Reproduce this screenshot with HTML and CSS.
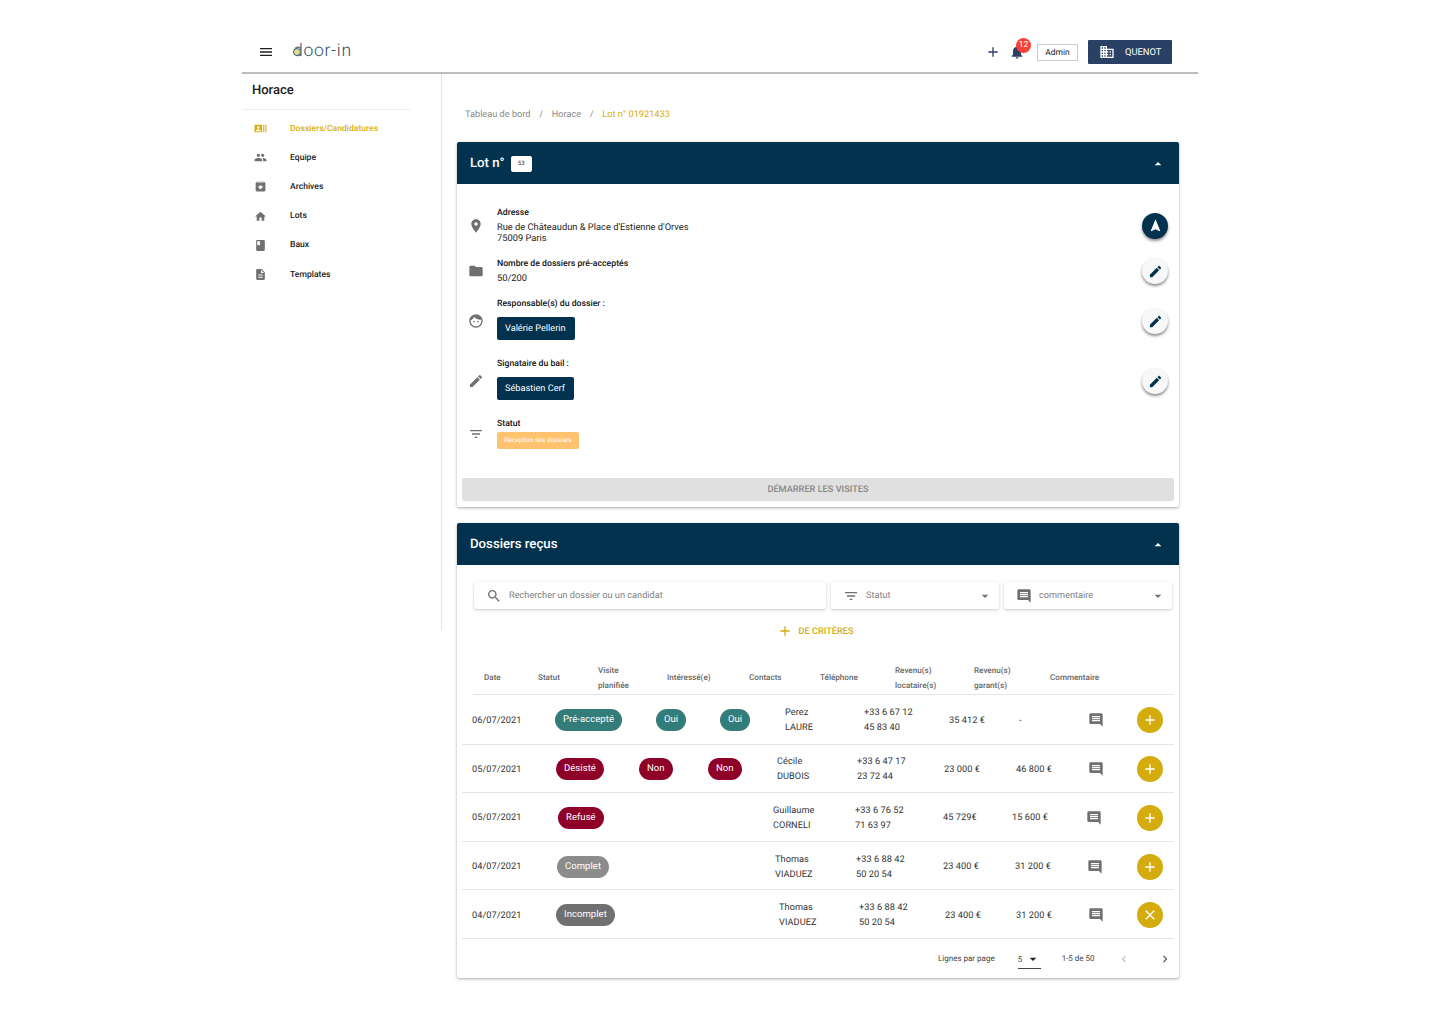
FILE: index.html
```html
<!DOCTYPE html>
<html lang="fr">
  <head>
    <meta charset="UTF-8" />
    <meta name="viewport" content="width=device-width, initial-scale=1.0" />
    <title>door-in</title>
    <link rel="stylesheet" href="styles.css">
  </head>
  <body>
    <svg class="defs" xmlns="http://www.w3.org/2000/svg">
      <symbol id="i-menu" viewBox="0 0 24 24"><path d="M3 18h18v-2H3v2zm0-5h18v-2H3v2zm0-7v2h18V6H3z"/></symbol>
      <symbol id="i-add" viewBox="0 0 24 24"><path d="M19 13h-6v6h-2v-6H5v-2h6V5h2v6h6v2z"/></symbol>
      <symbol id="i-bell" viewBox="0 0 24 24"><path d="M12 22c1.1 0 2-.9 2-2h-4c0 1.1.89 2 2 2zm6-6v-5c0-3.07-1.64-5.64-4.5-6.32V4c0-.83-.67-1.5-1.5-1.5s-1.5.67-1.5 1.5v.68C7.63 5.36 6 7.92 6 11v5l-2 2v1h16v-1l-2-2z"/></symbol>
      <symbol id="i-domain" viewBox="0 0 24 24"><path d="M12 7V3H2v18h20V7H12zM6 19H4v-2h2v2zm0-4H4v-2h2v2zm0-4H4V9h2v2zm0-4H4V5h2v2zm4 12H8v-2h2v2zm0-4H8v-2h2v2zm0-4H8V9h2v2zm0-4H8V5h2v2zm10 12h-8v-2h2v-2h-2v-2h2v-2h-2V9h8v10zm-2-8h-2v2h2v-2zm0 4h-2v2h2v-2z"/></symbol>
      <symbol id="i-actors" viewBox="0 0 24 24"><path d="M21 5v14h2V5h-2zm-4 14h2V5h-2v14zM14 5H2c-.55 0-1 .45-1 1v12c0 .55.45 1 1 1h12c.55 0 1-.45 1-1V6c0-.55-.45-1-1-1zM8 7.75c1.24 0 2.25 1.01 2.25 2.25S9.24 12.25 8 12.25 5.75 11.24 5.75 10 6.76 7.75 8 7.75zM12.5 17h-9v-.75c0-1.5 3-2.25 4.5-2.25s4.5.75 4.5 2.25V17z"/></symbol>
      <symbol id="i-people" viewBox="0 0 24 24"><path d="M16 11c1.66 0 2.99-1.34 2.99-3S17.66 5 16 5c-1.66 0-3 1.34-3 3s1.34 3 3 3zm-8 0c1.66 0 2.99-1.34 2.99-3S9.66 5 8 5C6.34 5 5 6.34 5 8s1.34 3 3 3zm0 2c-2.33 0-7 1.17-7 3.5V19h14v-2.5c0-2.33-4.67-3.5-7-3.5zm8 0c-.29 0-.62.02-.97.05 1.16.84 1.97 1.97 1.97 3.45V19h6v-2.5c0-2.33-4.67-3.5-7-3.5z"/></symbol>
      <symbol id="i-archive" viewBox="0 0 24 24"><path d="M20.54 5.23l-1.39-1.68C18.88 3.21 18.47 3 18 3H6c-.47 0-.88.21-1.16.55L3.46 5.23C3.17 5.57 3 6.02 3 6.5V19c0 1.1.9 2 2 2h14c1.1 0 2-.9 2-2V6.5c0-.48-.17-.93-.46-1.27zM12 17.5L6.5 12H10v-2h4v2h3.5L12 17.5zM5.12 5l.81-1h12l.94 1H5.12z"/></symbol>
      <symbol id="i-home" viewBox="0 0 24 24"><path d="M10 20v-6h4v6h5v-8h3L12 3 2 12h3v8z"/></symbol>
      <symbol id="i-book" viewBox="0 0 24 24"><path d="M18 2H6c-1.1 0-2 .9-2 2v16c0 1.1.9 2 2 2h12c1.1 0 2-.9 2-2V4c0-1.1-.9-2-2-2zM6 4h5v8l-2.5-1.5L6 12V4z"/></symbol>
      <symbol id="i-doc" viewBox="0 0 24 24"><path d="M14 2H6c-1.1 0-1.99.9-1.99 2L4 20c0 1.1.89 2 1.99 2H18c1.1 0 2-.9 2-2V8l-6-6zm2 16H8v-2h8v2zm0-4H8v-2h8v2zm-3-5V3.5L18.5 9H13z"/></symbol>
      <symbol id="i-place" viewBox="0 0 24 24"><path d="M12 2C8.13 2 5 5.13 5 9c0 5.25 7 13 7 13s7-7.75 7-13c0-3.87-3.13-7-7-7zm0 9.5c-1.38 0-2.5-1.12-2.5-2.5s1.12-2.5 2.5-2.5 2.5 1.12 2.5 2.5-1.12 2.5-2.5 2.5z"/></symbol>
      <symbol id="i-folder" viewBox="0 0 24 24"><path d="M10 4H4c-1.1 0-1.99.9-1.99 2L2 18c0 1.1.9 2 2 2h16c1.1 0 2-.9 2-2V8c0-1.1-.9-2-2-2h-8l-2-2z"/></symbol>
      <symbol id="i-face" viewBox="0 0 24 24"><path d="M9 11.75c-.69 0-1.25.56-1.25 1.25s.56 1.25 1.25 1.25 1.25-.56 1.25-1.25-.56-1.25-1.25-1.25zm6 0c-.69 0-1.25.56-1.25 1.25s.56 1.25 1.25 1.25 1.25-.56 1.25-1.25-.56-1.25-1.25-1.25zM12 2C6.48 2 2 6.48 2 12s4.48 10 10 10 10-4.48 10-10S17.52 2 12 2zm0 18c-4.41 0-8-3.59-8-8 0-.29.02-.58.05-.86 2.36-1.05 4.23-2.98 5.21-5.37C11.07 8.33 14.05 10 17.42 10c.78 0 1.53-.09 2.25-.26.21.71.33 1.47.33 2.26 0 4.41-3.59 8-8 8z"/></symbol>
      <symbol id="i-edit" viewBox="0 0 24 24"><path d="M3 17.25V21h3.75L17.81 9.94l-3.75-3.75L3 17.25zM20.71 7.04c.39-.39.39-1.02 0-1.41l-2.34-2.34c-.39-.39-1.02-.39-1.41 0l-1.83 1.83 3.75 3.75 1.83-1.83z"/></symbol>
      <symbol id="i-filter" viewBox="0 0 24 24"><path d="M10 18h4v-2h-4v2zM3 6v2h18V6H3zm3 7h12v-2H6v2z"/></symbol>
      <symbol id="i-nav" viewBox="0 0 24 24"><path d="M12 2L4.5 20.29l.71.71L12 18l6.79 3 .71-.71z"/></symbol>
      <symbol id="i-search" viewBox="0 0 24 24"><path d="M15.5 14h-.79l-.28-.27C15.41 12.59 16 11.11 16 9.5 16 5.91 13.09 3 9.5 3S3 5.91 3 9.5 5.91 16 9.5 16c1.61 0 3.09-.59 4.23-1.57l.27.28v.79l5 4.99L20.49 19l-4.99-5zm-6 0C7.01 14 5 11.99 5 9.5S7.01 5 9.5 5 14 7.01 14 9.5 11.99 14 9.5 14z"/></symbol>
      <symbol id="i-comment" viewBox="0 0 24 24"><path d="M21.99 4c0-1.1-.89-2-1.99-2H4c-1.1 0-2 .9-2 2v12c0 1.1.9 2 2 2h14l4 4-.01-18zM18 14H6v-2h12v2zm0-3H6V9h12v2zm0-3H6V6h12v2z"/></symbol>
      <symbol id="i-down" viewBox="0 0 24 24"><path d="M7 10l5 5 5-5z"/></symbol>
      <symbol id="i-up" viewBox="0 0 24 24"><path d="M7 14l5-5 5 5z"/></symbol>
      <symbol id="i-left" viewBox="0 0 24 24"><path d="M15.41 7.41L14 6l-6 6 6 6 1.41-1.41L10.83 12z"/></symbol>
      <symbol id="i-right" viewBox="0 0 24 24"><path d="M10 6L8.59 7.41 13.17 12l-4.58 4.59L10 18l6-6z"/></symbol>
      <symbol id="i-close" viewBox="0 0 24 24"><path d="M19 6.41L17.59 5 12 10.59 6.41 5 5 6.41 10.59 12 5 17.59 6.41 19 12 13.41 17.59 19 19 17.59 13.41 12z"/></symbol>
    </svg>

    <div class="app">
      <header class="topbar">
        <svg class="menu-icon"><use href="#i-menu"/></svg>
        <div class="logo">
          <span class="logo-dot"></span>
          <span>door-in</span>
        </div>
        <div class="topbar-right">
          <svg class="top-add"><use href="#i-add"/></svg>
          <div class="bell">
            <svg><use href="#i-bell"/></svg>
            <span class="badge">12</span>
          </div>
          <div class="role">Admin</div>
          <div class="company">
            <svg><use href="#i-domain"/></svg>
            <span>QUENOT</span>
          </div>
        </div>
      </header>

      <div class="layout">
        <aside class="sidebar">
          <div class="side-title">Horace</div>
          <nav class="side-nav">
            <a class="nav-item active"><svg><use href="#i-actors"/></svg>Dossiers/Candidatures</a>
            <a class="nav-item"><svg><use href="#i-people"/></svg>Equipe</a>
            <a class="nav-item"><svg><use href="#i-archive"/></svg>Archives</a>
            <a class="nav-item"><svg><use href="#i-home"/></svg>Lots</a>
            <a class="nav-item"><svg><use href="#i-book"/></svg>Baux</a>
            <a class="nav-item"><svg><use href="#i-doc"/></svg>Templates</a>
          </nav>
        </aside>

        <main class="main">
          <div class="crumbs">
            <span>Tableau de bord</span>
            <span>/</span>
            <span>Horace</span>
            <span>/</span>
            <span class="crumb-current">Lot n° 01921433</span>
          </div>

          <section class="card">
            <div class="card-head">
              <div class="card-title">Lot n° <span class="lot-tag">53</span></div>
              <svg class="head-arrow"><use href="#i-up"/></svg>
            </div>
            <div class="lot-body">
              <div class="info-row">
                <svg class="info-icon"><use href="#i-place"/></svg>
                <div class="info-text">
                  <div class="info-label">Adresse</div>
                  <div class="info-value">Rue de Châteaudun &amp; Place d'Estienne d'Orves<br />75009 Paris</div>
                </div>
                <button class="round-btn dark"><svg><use href="#i-nav"/></svg></button>
              </div>
              <div class="info-row">
                <svg class="info-icon"><use href="#i-folder"/></svg>
                <div class="info-text">
                  <div class="info-label">Nombre de dossiers pré-acceptés</div>
                  <div class="info-value">50/200</div>
                </div>
                <button class="round-btn"><svg><use href="#i-edit"/></svg></button>
              </div>
              <div class="info-row">
                <svg class="info-icon"><use href="#i-face"/></svg>
                <div class="info-text">
                  <div class="info-label">Responsable(s) du dossier :</div>
                  <div class="person">Valérie Pellerin</div>
                </div>
                <button class="round-btn"><svg><use href="#i-edit"/></svg></button>
              </div>
              <div class="info-row">
                <svg class="info-icon"><use href="#i-edit"/></svg>
                <div class="info-text">
                  <div class="info-label">Signataire du bail :</div>
                  <div class="person">Sébastien Cerf</div>
                </div>
                <button class="round-btn"><svg><use href="#i-edit"/></svg></button>
              </div>
              <div class="info-row">
                <svg class="info-icon"><use href="#i-filter"/></svg>
                <div class="info-text">
                  <div class="info-label">Statut</div>
                  <div class="status-tag">Réception des dossiers</div>
                </div>
              </div>
              <div class="start-btn">DÉMARRER LES VISITES</div>
            </div>
          </section>

          <section class="card">
            <div class="card-head">
              <div class="card-title">Dossiers reçus</div>
              <svg class="head-arrow"><use href="#i-up"/></svg>
            </div>
            <div class="filters">
              <div class="filter filter-search">
                <svg class="filter-icon"><use href="#i-search"/></svg>
                <span>Rechercher un dossier ou un candidat</span>
              </div>
              <div class="filter filter-select">
                <svg class="filter-icon"><use href="#i-filter"/></svg>
                <span>Statut</span>
                <svg class="filter-arrow"><use href="#i-down"/></svg>
              </div>
              <div class="filter filter-select">
                <svg class="filter-icon"><use href="#i-comment"/></svg>
                <span>commentaire</span>
                <svg class="filter-arrow"><use href="#i-down"/></svg>
              </div>
            </div>
            <div class="more-filters">
              <svg><use href="#i-add"/></svg>
              <span>DE CRITÈRES</span>
            </div>

            <div class="table-head">
              <div>Date</div>
              <div>Statut</div>
              <div>Visite<br />planifiée</div>
              <div>Intéressé(e)</div>
              <div>Contacts</div>
              <div>Téléphone</div>
              <div>Revenu(s)<br />locataire(s)</div>
              <div>Revenu(s)<br />garant(s)</div>
              <div>Commentaire</div>
            </div>

            <div class="row row-a">
              <div>06/07/2021</div>
              <div><span class="chip teal">Pré-accepté</span></div>
              <div><span class="chip teal">Oui</span></div>
              <div><span class="chip teal">Oui</span></div>
              <div class="two-lines">Perez<br />LAURE</div>
              <div class="two-lines">+33 6 67 12<br />45 83 40</div>
              <div>35 412 €</div>
              <div>-</div>
              <svg class="row-comment"><use href="#i-comment"/></svg>
              <button class="gold-btn"><svg><use href="#i-add"/></svg></button>
            </div>
            <div class="row row-b">
              <div>05/07/2021</div>
              <div><span class="chip red">Désisté</span></div>
              <div><span class="chip red">Non</span></div>
              <div><span class="chip red">Non</span></div>
              <div class="two-lines">Cécile<br />DUBOIS</div>
              <div class="two-lines">+33 6 47 17<br />23 72 44</div>
              <div>23 000 €</div>
              <div>46 800 €</div>
              <svg class="row-comment"><use href="#i-comment"/></svg>
              <button class="gold-btn"><svg><use href="#i-add"/></svg></button>
            </div>
            <div class="row row-c">
              <div>05/07/2021</div>
              <div><span class="chip red">Refusé</span></div>
              <div></div>
              <div></div>
              <div class="two-lines">Guillaume<br />CORNELI</div>
              <div class="two-lines">+33 6 76 52<br />71 63 97</div>
              <div>45 729€</div>
              <div>15 600 €</div>
              <svg class="row-comment"><use href="#i-comment"/></svg>
              <button class="gold-btn"><svg><use href="#i-add"/></svg></button>
            </div>
            <div class="row row-d">
              <div>04/07/2021</div>
              <div><span class="chip grey">Complet</span></div>
              <div></div>
              <div></div>
              <div class="two-lines">Thomas<br />VIADUEZ</div>
              <div class="two-lines">+33 6 88 42<br />50 20 54</div>
              <div>23 400 €</div>
              <div>31 200 €</div>
              <svg class="row-comment"><use href="#i-comment"/></svg>
              <button class="gold-btn"><svg><use href="#i-add"/></svg></button>
            </div>
            <div class="row row-e">
              <div>04/07/2021</div>
              <div><span class="chip dark-grey">Incomplet</span></div>
              <div></div>
              <div></div>
              <div class="two-lines">Thomas<br />VIADUEZ</div>
              <div class="two-lines">+33 6 88 42<br />50 20 54</div>
              <div>23 400 €</div>
              <div>31 200 €</div>
              <svg class="row-comment"><use href="#i-comment"/></svg>
              <button class="gold-btn"><svg><use href="#i-close"/></svg></button>
            </div>

            <div class="pager">
              <span class="pager-label">Lignes par page</span>
              <div class="pager-select">
                <span>5</span>
                <svg><use href="#i-down"/></svg>
              </div>
              <span class="pager-count">1-5 de 50</span>
              <svg class="pager-prev"><use href="#i-left"/></svg>
              <svg class="pager-next"><use href="#i-right"/></svg>
            </div>
          </section>
        </main>
      </div>
    </div>
  </body>
</html>
```

FILE: styles.css
```css
* {
  margin: 0px;
  box-sizing: border-box;
  font-family: Roboto, "Liberation Sans", sans-serif;
  text-rendering: geometricPrecision;
}

body {
  background-color: #fff;
  color: #222;
}

svg {
  fill: currentColor;
  flex-shrink: 0;
}

button {
  border: none;
  padding: 0px;
  cursor: pointer;
}

.defs {
  display: none;
}

.app {
  width: 956px;
  margin: 30px auto 0px;
}

/* top bar */
.topbar {
  display: flex;
  align-items: center;
  height: 44px;
  padding-top: 2px;
  border-bottom: 2px solid #bdbdbd;
}

.menu-icon {
  width: 16px;
  height: 16px;
  margin-left: 16px;
  color: #1e1e1e;
}

.logo {
  position: relative;
  margin-left: 19px;
  margin-top: -2px;
  font-size: 17.5px;
  font-weight: 300;
  letter-spacing: 0.7px;
  color: #2b4c68;
}

.logo-dot {
  position: absolute;
  left: 0px;
  top: 7px;
  width: 8px;
  height: 8px;
  border: 1px solid #2b6c90;
  border-radius: 50%;
  background-color: #e6d98a;
}

.topbar-right {
  display: flex;
  align-items: center;
  margin-left: auto;
  margin-right: 26px;
}

.top-add {
  width: 16px;
  height: 16px;
  color: #2a4065;
}

.bell {
  position: relative;
  width: 16px;
  height: 16px;
  margin-left: 8px;
  color: #2a4065;
}

.bell svg {
  width: 16px;
  height: 16px;
}

.badge {
  position: absolute;
  left: 7px;
  top: -6px;
  width: 15px;
  height: 15px;
  border-radius: 50%;
  background-color: #f44336;
  color: #fff;
  font-size: 8.5px;
  line-height: 15px;
  text-align: center;
}

.role {
  width: 41px;
  height: 17px;
  margin-left: 12px;
  border: 1px solid #ccc;
  font-size: 8.5px;
  line-height: 16px;
  text-align: center;
}

.company {
  display: flex;
  align-items: center;
  width: 84px;
  height: 24px;
  margin-left: 10px;
  padding-left: 11px;
  border-radius: 1px;
  background-color: #2a4065;
  color: #fff;
  font-size: 9.4px;
}

.company svg {
  width: 16px;
  height: 16px;
  margin-right: 10px;
}

.layout {
  display: flex;
  align-items: flex-start;
}

/* sidebar */
.sidebar {
  width: 200px;
  height: 556px;
  border-right: 1px solid #e4e4e4;
}

.side-title {
  width: 169px;
  height: 36px;
  padding-left: 10px;
  border-bottom: 1px solid #eee;
  font-size: 13px;
  font-weight: 500;
  line-height: 33px;
  color: #222;
}

.side-nav {
  padding-top: 4px;
}

.nav-item {
  display: flex;
  align-items: center;
  height: 29.2px;
  padding-left: 12px;
  font-size: 8.6px;
  font-weight: 500;
  color: #222;
}

.nav-item svg {
  width: 13px;
  height: 13px;
  margin-right: 23px;
  color: #707070;
}

.nav-item.active,
.nav-item.active svg {
  color: #d9b00f;
}

/* main */
.main {
  width: 737px;
  padding-left: 15px;
}

.crumbs {
  display: flex;
  gap: 8.7px;
  height: 68px;
  padding-left: 8px;
  padding-top: 35px;
  font-size: 9.2px;
  color: #8a8a8a;
}

.crumb-current {
  color: #d4ac0d;
}

.card {
  width: 722px;
  margin-bottom: 16px;
  border-radius: 2px;
  background-color: #fff;
  box-shadow: 0px 1px 3px rgba(0, 0, 0, 0.35);
}

.card-head {
  display: flex;
  align-items: center;
  justify-content: space-between;
  height: 42px;
  padding-left: 13px;
  padding-right: 13px;
  padding-top: 1px;
  border-radius: 2px 2px 0px 0px;
  background-color: #03324f;
  color: #fff;
}

.card-title {
  display: flex;
  align-items: center;
  font-size: 13.2px;
  font-weight: 500;
}

.lot-tag {
  width: 21px;
  height: 16px;
  margin-left: 6px;
  border-radius: 2px;
  background-color: #fff;
  color: #333;
  font-size: 6px;
  font-weight: 400;
  line-height: 16px;
  text-align: center;
}

.head-arrow {
  width: 16px;
  height: 16px;
}

/* lot details */
.lot-body {
  padding: 23px 5px 6px;
}

.info-row {
  display: flex;
  align-items: center;
  margin-bottom: 14px;
}

.info-icon {
  width: 16px;
  height: 16px;
  margin-left: 5.5px;
  margin-right: 13.5px;
  color: #707070;
}

.info-text {
  flex: 1;
  font-size: 9.3px;
  line-height: 11px;
}

.info-label {
  padding-top: 1px;
  font-size: 8.7px;
  font-weight: 500;
  color: #111;
}

.info-value {
  margin-top: 3px;
  color: #222;
}

.person {
  width: fit-content;
  height: 23px;
  margin-top: 7px;
  margin-bottom: 4px;
  padding-left: 8px;
  padding-right: 9px;
  border-radius: 2px;
  background-color: #03324f;
  color: #fff;
  font-size: 9.2px;
  line-height: 23px;
}

.status-tag {
  width: 82px;
  height: 17px;
  margin-top: 2px;
  border-radius: 2px;
  background-color: #ffc26f;
  color: #fff;
  font-size: 6.5px;
  line-height: 17px;
  text-align: center;
}

.round-btn {
  display: flex;
  align-items: center;
  justify-content: center;
  width: 26px;
  height: 26px;
  margin-right: 6px;
  border-radius: 50%;
  background-color: #f8f8f8;
  color: #03324f;
  box-shadow: 0px 2px 3px rgba(0, 0, 0, 0.45);
}

.round-btn svg {
  width: 15px;
  height: 15px;
}

.round-btn.dark {
  background-color: #03324f;
  color: #fff;
}

.start-btn {
  height: 23px;
  margin-top: 29px;
  border-radius: 2px;
  background-color: #e0e0e0;
  color: #888;
  font-size: 9.2px;
  font-weight: 500;
  line-height: 23px;
  text-align: center;
}

/* filters */
.filters {
  display: flex;
  gap: 5px;
  padding-top: 17px;
  padding-left: 17px;
}

.filter {
  display: flex;
  align-items: center;
  height: 27px;
  border-radius: 2px;
  background-color: #fff;
  color: #808080;
  font-size: 9.2px;
  box-shadow: 0px 1px 3px rgba(0, 0, 0, 0.22);
}

.filter-search {
  width: 352px;
  padding-left: 12px;
}

.filter-select {
  width: 168px;
  padding-left: 12px;
}

.filter-icon {
  width: 16px;
  height: 16px;
  margin-right: 7px;
  color: #707070;
}

.filter-arrow {
  width: 16px;
  height: 16px;
  margin-left: auto;
  margin-right: 6px;
  color: #707070;
}

.more-filters {
  display: flex;
  align-items: center;
  justify-content: center;
  gap: 5px;
  height: 44px;
  padding-right: 5px;
  color: #d4ac0d;
  font-size: 9.2px;
  font-weight: 500;
}

.more-filters svg {
  width: 16px;
  height: 16px;
}

/* table */
.table-head {
  display: grid;
  grid-template-columns: 54px 60px 69px 82px 71px 75px 79px 76px 1fr;
  align-items: center;
  height: 42px;
  margin-left: 16px;
  margin-right: 5px;
  padding-left: 11px;
  padding-top: 8px;
  border-bottom: 1px solid #e4e4e4;
  color: #666;
  font-size: 8.1px;
  font-weight: 500;
  line-height: 15px;
}

.row {
  display: grid;
  align-items: center;
  height: 48.6px;
  margin-left: 5px;
  margin-right: 5px;
  padding-left: 10px;
  padding-top: 2px;
  border-bottom: 1px solid #e4e4e4;
  color: #333;
  font-size: 9.2px;
  letter-spacing: 0.05px;
}

.row-a {
  height: 49.6px;
  grid-template-columns: 83px 101px 64px 65px 79px 85px 70px 69px 49px 26px;
}

.row-b {
  grid-template-columns: 84px 83px 69px 69px 80px 87px 72px 72px 49px 26px;
}

.row-c {
  grid-template-columns: 86px 81px 67px 67px 82px 88px 69px 74px 51px 26px;
}

.row-d {
  grid-template-columns: 85px 82px 68px 68px 81px 87px 72px 72px 50px 26px;
}

.row-e {
  grid-template-columns: 84px 83px 69px 71px 80px 86px 71px 72px 49px 26px;
}

.two-lines {
  line-height: 15px;
}

.chip {
  display: inline-block;
  height: 22px;
  padding-left: 8px;
  padding-right: 8px;
  border-radius: 11px;
  color: #fff;
  font-size: 9.5px;
  line-height: 22px;
  white-space: nowrap;
}

.teal {
  background-color: #327d7a;
}

.red {
  background-color: #8f0029;
}

.grey {
  background-color: #8c8c8c;
}

.dark-grey {
  background-color: #707070;
}

.row-comment {
  width: 16px;
  height: 16px;
  color: #707070;
}

.gold-btn {
  display: flex;
  align-items: center;
  justify-content: center;
  width: 26px;
  height: 26px;
  border-radius: 50%;
  background-color: #d4ac0d;
  color: #fff;
}

.gold-btn svg {
  width: 16px;
  height: 16px;
}

/* pager */
.pager {
  display: flex;
  align-items: center;
  height: 39px;
  padding-left: 481px;
  padding-top: 1px;
  font-size: 8px;
  color: #444;
}

.pager-select {
  display: flex;
  align-items: center;
  width: 23px;
  height: 19px;
  margin-left: 23px;
  margin-top: 2px;
  border-bottom: 1px solid #444;
}

.pager-select svg {
  width: 16px;
  height: 16px;
  margin-left: 3px;
  color: #222;
}

.pager-count {
  margin-left: 21px;
}

.pager-prev {
  width: 14px;
  height: 14px;
  margin-left: 22px;
  color: #bdbdbd;
}

.pager-next {
  width: 14px;
  height: 14px;
  margin-left: 27px;
  color: #555;
}
```
